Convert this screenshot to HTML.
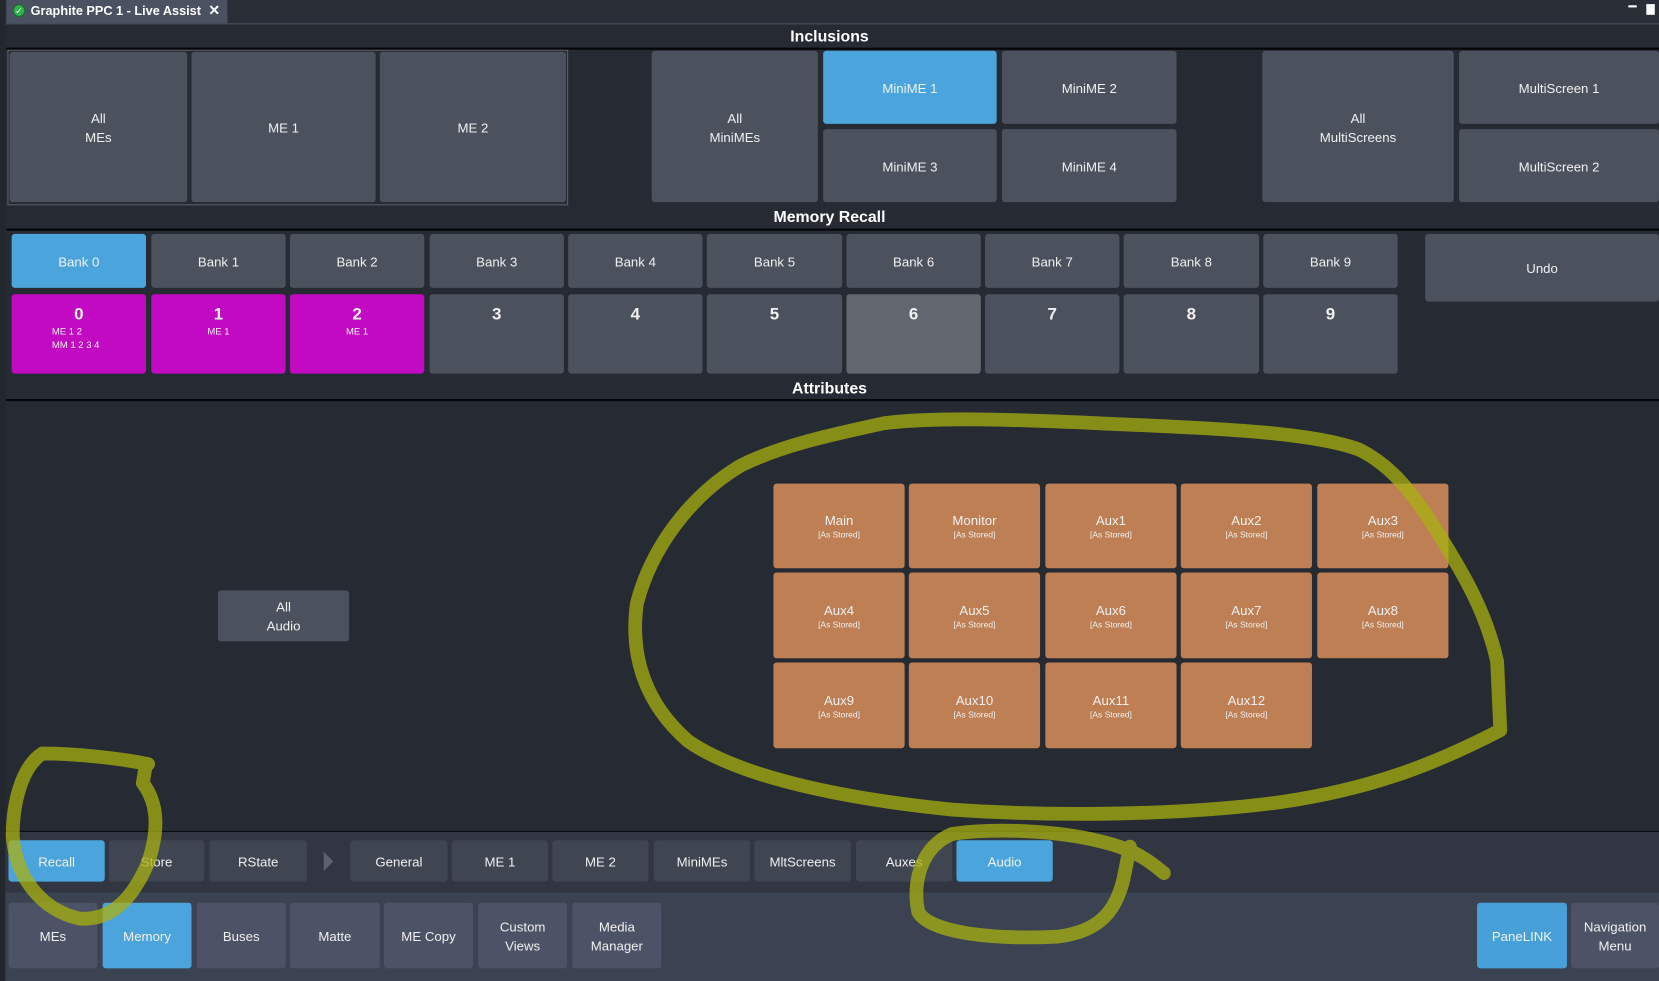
<!DOCTYPE html>
<html><head><meta charset="utf-8">
<style>
html,body{margin:0;padding:0;background:#262a33;overflow:hidden;width:1659px;height:981px}
#w{position:absolute;left:0;top:0;width:1568px;height:927px;transform-origin:0 0;transform:scale(1.05804,1.0583);background:#262a33;font-family:"Liberation Sans",sans-serif;color:#f0f0f0}
.b{position:absolute;background:#4c515e;border-radius:3px;display:flex;align-items:center;justify-content:center;text-align:center;font-size:12.5px;line-height:18px;box-sizing:border-box;padding-top:2px}
.bl{background:#4ba5dc}
.mg{background:#c20ac2}
.or{background:#bd7f53;flex-direction:column;line-height:16px}
.or small{font-size:8px;line-height:12px}
.h{position:absolute;left:0;width:1568px;text-align:center;font-weight:bold;font-size:15px;color:#fff}
.ln{position:absolute;left:6px;width:1562px;height:2px;background:#050608}
.num{align-items:flex-start;flex-direction:column;justify-content:flex-start;font-weight:bold;font-size:16px;padding-top:11px}
.num span{display:block;width:100%;text-align:center}
.num i{font-style:normal;font-weight:normal;font-size:9px;line-height:13px;display:block;text-align:left;padding-left:38px}
.t2{background:#404552}
.t3{background:#4c5366}
</style></head><body><div id="w">
<div style="position:absolute;left:0;top:0;width:1568px;height:22px;background:#2a2e36;border-bottom:1px solid #4a5160"></div>
<div style="position:absolute;left:0;top:0;width:5px;height:927px;background:#22262d"></div>
<div style="position:absolute;left:6px;top:0;width:209px;height:22px;background:#4a5161"></div>
<div style="position:absolute;left:12px;top:4px;width:12px;height:12px;border-radius:50%;background:#2fb34a;border:1px solid #1a6a2a;box-sizing:border-box;color:#fff;font-size:9px;line-height:10px;text-align:center">✓</div>
<div style="position:absolute;left:29px;top:3px;font-size:12px;font-weight:bold;color:#fff">Graphite PPC 1 - Live Assist</div>
<div style="position:absolute;left:197px;top:2px;font-size:13px;font-weight:bold;color:#fff">✕</div>
<div style="position:absolute;left:1539px;top:5px;width:8px;height:2px;background:#fff"></div>
<div style="position:absolute;left:1556px;top:4px;width:8px;height:8px;background:#fff;border-top:2px solid #fff"></div>

<div class="h" style="top:26px">Inclusions</div>
<div class="ln" style="top:45px"></div>
<div style="position:absolute;left:7px;top:47px;width:530px;height:147px;border:1px solid #5a5f6a;box-sizing:border-box"></div>
<div class="b" style="left:9px;top:49px;width:168px;height:142px">All<br>MEs</div>
<div class="b" style="left:181px;top:49px;width:174px;height:142px">ME 1</div>
<div class="b" style="left:359px;top:49px;width:176px;height:142px">ME 2</div>
<div class="b" style="left:616px;top:48px;width:157px;height:143px">All<br>MiniMEs</div>
<div class="b bl" style="left:778px;top:48px;width:164px;height:69px">MiniME 1</div>
<div class="b" style="left:947px;top:48px;width:165px;height:69px">MiniME 2</div>
<div class="b" style="left:778px;top:122px;width:164px;height:69px">MiniME 3</div>
<div class="b" style="left:947px;top:122px;width:165px;height:69px">MiniME 4</div>
<div class="b" style="left:1193px;top:48px;width:181px;height:143px">All<br>MultiScreens</div>
<div class="b" style="left:1379px;top:48px;width:189px;height:69px">MultiScreen 1</div>
<div class="b" style="left:1379px;top:122px;width:189px;height:69px">MultiScreen 2</div>

<div class="h" style="top:197px">Memory Recall</div>
<div class="ln" style="top:216px"></div>
<div class="b bl" style="left:11px;top:221px;width:127px;height:51px">Bank 0</div>
<div class="b" style="left:143px;top:221px;width:127px;height:51px">Bank 1</div>
<div class="b" style="left:274px;top:221px;width:127px;height:51px">Bank 2</div>
<div class="b" style="left:406px;top:221px;width:127px;height:51px">Bank 3</div>
<div class="b" style="left:537px;top:221px;width:127px;height:51px">Bank 4</div>
<div class="b" style="left:668px;top:221px;width:128px;height:51px">Bank 5</div>
<div class="b" style="left:800px;top:221px;width:127px;height:51px">Bank 6</div>
<div class="b" style="left:931px;top:221px;width:127px;height:51px">Bank 7</div>
<div class="b" style="left:1062px;top:221px;width:128px;height:51px">Bank 8</div>
<div class="b" style="left:1194px;top:221px;width:127px;height:51px">Bank 9</div>
<div class="b" style="left:1347px;top:221px;width:221px;height:64px">Undo</div>
<div class="b num mg" style="left:11px;top:278px;width:127px;height:75px"><span>0</span><i>ME 1 2<br>MM 1 2 3 4</i></div>
<div class="b num mg" style="left:143px;top:278px;width:127px;height:75px"><span>1</span><span style="font-size:9px;font-weight:normal;line-height:13px">ME 1</span></div>
<div class="b num mg" style="left:274px;top:278px;width:127px;height:75px"><span>2</span><span style="font-size:9px;font-weight:normal;line-height:13px">ME 1</span></div>
<div class="b num" style="left:406px;top:278px;width:127px;height:75px"><span>3</span></div>
<div class="b num" style="left:537px;top:278px;width:127px;height:75px"><span>4</span></div>
<div class="b num" style="left:668px;top:278px;width:128px;height:75px"><span>5</span></div>
<div class="b num" style="left:800px;top:278px;width:127px;height:75px;background:#62666f"><span>6</span></div>
<div class="b num" style="left:931px;top:278px;width:127px;height:75px"><span>7</span></div>
<div class="b num" style="left:1062px;top:278px;width:128px;height:75px"><span>8</span></div>
<div class="b num" style="left:1194px;top:278px;width:127px;height:75px"><span>9</span></div>

<div class="h" style="top:359px">Attributes</div>
<div class="ln" style="top:377px"></div>
<div class="b" style="left:206px;top:558px;width:124px;height:48px">All<br>Audio</div>

<div class="b or" style="left:731px;top:457px;width:124px;height:80px">Main<small>[As Stored]</small></div>
<div class="b or" style="left:859px;top:457px;width:124px;height:80px">Monitor<small>[As Stored]</small></div>
<div class="b or" style="left:988px;top:457px;width:124px;height:80px">Aux1<small>[As Stored]</small></div>
<div class="b or" style="left:1116px;top:457px;width:124px;height:80px">Aux2<small>[As Stored]</small></div>
<div class="b or" style="left:1245px;top:457px;width:124px;height:80px">Aux3<small>[As Stored]</small></div>
<div class="b or" style="left:731px;top:541px;width:124px;height:81px">Aux4<small>[As Stored]</small></div>
<div class="b or" style="left:859px;top:541px;width:124px;height:81px">Aux5<small>[As Stored]</small></div>
<div class="b or" style="left:988px;top:541px;width:124px;height:81px">Aux6<small>[As Stored]</small></div>
<div class="b or" style="left:1116px;top:541px;width:124px;height:81px">Aux7<small>[As Stored]</small></div>
<div class="b or" style="left:1245px;top:541px;width:124px;height:81px">Aux8<small>[As Stored]</small></div>
<div class="b or" style="left:731px;top:626px;width:124px;height:81px">Aux9<small>[As Stored]</small></div>
<div class="b or" style="left:859px;top:626px;width:124px;height:81px">Aux10<small>[As Stored]</small></div>
<div class="b or" style="left:988px;top:626px;width:124px;height:81px">Aux11<small>[As Stored]</small></div>
<div class="b or" style="left:1116px;top:626px;width:124px;height:81px">Aux12<small>[As Stored]</small></div>

<div style="position:absolute;left:5px;top:785px;width:1563px;height:57px;background:#313642;border-top:1px solid #050608;border-bottom:1px solid #050608"></div>
<div class="b bl" style="left:8px;top:794px;width:91px;height:39px">Recall</div>
<div class="b t2" style="left:103px;top:794px;width:90px;height:39px">Store</div>
<div class="b t2" style="left:198px;top:794px;width:92px;height:39px">RState</div>
<div style="position:absolute;left:306px;top:805px;width:0;height:0;border-left:9px solid #5d626e;border-top:9px solid transparent;border-bottom:9px solid transparent"></div>
<div class="b t2" style="left:331px;top:794px;width:92px;height:39px">General</div>
<div class="b t2" style="left:427px;top:794px;width:91px;height:39px">ME 1</div>
<div class="b t2" style="left:522px;top:794px;width:91px;height:39px">ME 2</div>
<div class="b t2" style="left:618px;top:794px;width:91px;height:39px">MiniMEs</div>
<div class="b t2" style="left:713px;top:794px;width:91px;height:39px">MltScreens</div>
<div class="b t2" style="left:809px;top:794px;width:91px;height:39px">Auxes</div>
<div class="b bl" style="left:904px;top:794px;width:91px;height:39px">Audio</div>

<div style="position:absolute;left:5px;top:843px;width:1563px;height:84px;background:#3b4352"></div>
<div class="b t3" style="left:8px;top:853px;width:84px;height:62px">MEs</div>
<div class="b bl" style="left:97px;top:853px;width:84px;height:62px">Memory</div>
<div class="b t3" style="left:186px;top:853px;width:84px;height:62px">Buses</div>
<div class="b t3" style="left:274px;top:853px;width:85px;height:62px">Matte</div>
<div class="b t3" style="left:363px;top:853px;width:84px;height:62px">ME Copy</div>
<div class="b t3" style="left:452px;top:853px;width:84px;height:62px">Custom<br>Views</div>
<div class="b t3" style="left:541px;top:853px;width:84px;height:62px">Media<br>Manager</div>
<div class="b bl" style="left:1396px;top:853px;width:85px;height:62px;background:#47a0d8">PaneLINK</div>
<div class="b t3" style="left:1485px;top:853px;width:83px;height:62px">Navigation<br>Menu</div>

<svg style="position:absolute;left:0;top:0" width="1568" height="927" viewBox="0 0 1568 927">
<g fill="none" stroke="#a8b010" stroke-opacity="0.75" stroke-width="13" stroke-linejoin="round" stroke-linecap="round">
<path d="M1418,690 L1415,625 C1405,580 1385,545 1360,505 C1335,465 1315,440 1285,425 C1240,408 1150,405 1040,400 C950,396 880,394 835,400 C790,410 740,420 700,440 C650,470 615,520 602,570 C595,620 610,665 650,700 C700,735 800,755 900,765 C1000,772 1120,770 1210,758 C1300,745 1360,720 1418,690"/>
<path d="M140,722 C110,716 70,712 40,712 C20,725 12,760 12,790 C15,830 40,860 75,868 C105,870 125,850 140,815 C150,785 150,760 135,740 L138,722"/>
<path d="M1100,825 C1085,812 1070,802 1040,795 C1000,785 940,782 900,788 C870,800 862,835 868,862 C880,882 940,888 1000,885 C1040,880 1055,860 1062,830 L1068,800"/>
</g></svg>
</div></body></html>
